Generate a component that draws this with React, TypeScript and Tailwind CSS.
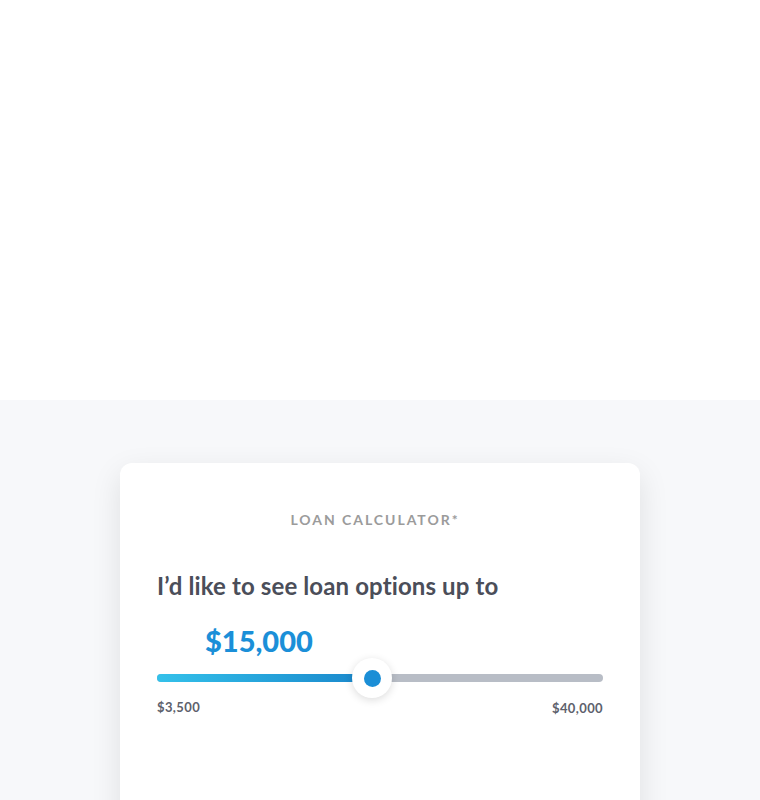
const MIN = 3500;
const MAX = 40000;
const VALUE = 15000;

// thumb sits at ~48% of the track in the reference
const PCT = 48.3;

function formatMoney(n: number) {
  return "$" + n.toLocaleString("en-US");
}

function LoanSlider() {
  return (
    <div className="relative h-[40px]">
      <div className="absolute left-0 right-0 top-[16px] h-[8px] rounded-full bg-[#b8bdc6]" />
      <div
        className="absolute left-0 top-[16px] h-[8px] rounded-full bg-gradient-to-r from-[#34c1ea] to-[#1a86cb]"
        style={{ width: `${PCT}%` }}
      />
      <div
        className="absolute top-0 flex h-[40px] w-[40px] -translate-x-1/2 items-center justify-center rounded-full bg-white shadow-[0_2px_8px_rgba(0,0,0,0.14)]"
        style={{ left: `${PCT}%` }}
      >
        <div className="h-[17px] w-[17px] rounded-full bg-[#1b8ed6]" />
      </div>
    </div>
  );
}

export default function App() {
  return (
    <div className="h-[800px] overflow-hidden bg-white font-['Lato',sans-serif]">
      <div className="h-[400px] bg-white" />
      <div className="h-[400px] bg-[#f7f8fa] pt-[63px]">
        <div className="mx-auto h-[400px] w-[520px] rounded-[12px] bg-white px-[37px] pt-[47px] shadow-[0_10px_30px_rgba(0,0,0,0.10)]">
          <div className="pr-[10px] text-center text-[14px] font-bold leading-[20px] tracking-[0.14em] text-[#9b9b9b]">
            LOAN CALCULATOR*
          </div>
          <h2 className="mt-[41px] text-[24px] font-bold leading-[30px] tracking-[0.005em] text-[#4b4e59]">
            I’d like to see loan options up to
          </h2>
          <div className="mt-[24px] pl-[48px] text-[29px] font-black leading-[32px] text-[#1b8fd8]">
            {formatMoney(VALUE)}
          </div>
          <div className="mt-[1px]">
            <LoanSlider />
          </div>
          <div className="mt-[0px] flex justify-between text-[13px] font-bold tracking-[0.03em] text-[#5d616c]">
            <span>{formatMoney(MIN)}</span>
            <span className="pt-[1px]">{formatMoney(MAX)}</span>
          </div>
        </div>
      </div>
    </div>
  );
}
